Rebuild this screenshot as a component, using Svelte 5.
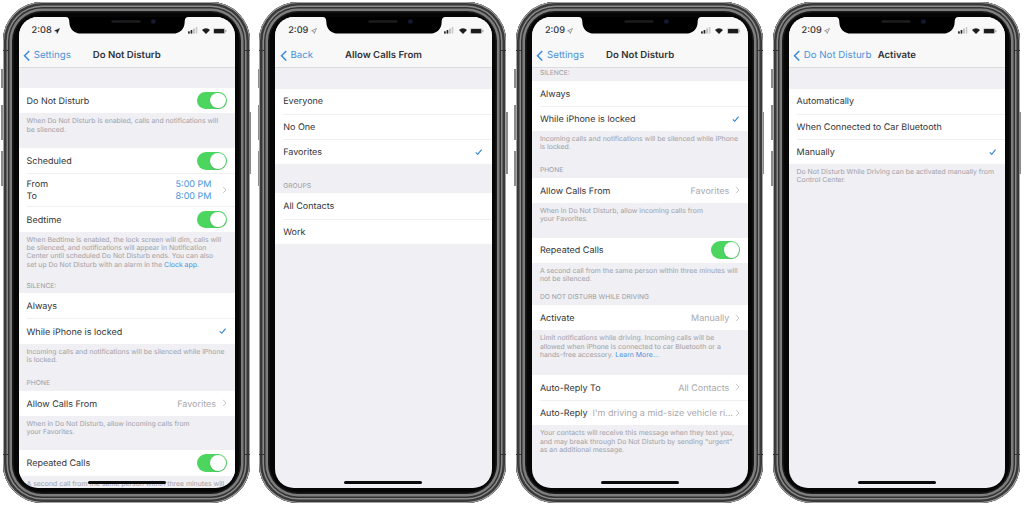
<script>
  const gap = (h) => ({ kind: 'gap', h });
  const head = (text, h) => ({ kind: 'head', text, h });
  const foot = (lines, link = '') => ({ kind: 'foot', lines, link });
  const group = (...rows) => ({ kind: 'group', rows });

  const phones = [
    {
      time: '2:08',
      solidArrow: true,
      back: 'Settings',
      title: 'Do Not Disturb',
      blocks: [
        gap(20.5),
        group({ label: 'Do Not Disturb', toggle: true }),
        foot(['When Do Not Disturb is enabled, calls and notifications will', 'be silenced.']),
        gap(14.2),
        group(
          { label: 'Scheduled', toggle: true },
          { times: [['From', '5:00 PM'], ['To', '8:00 PM']] },
          { label: 'Bedtime', toggle: true }
        ),
        foot(
          [
            'When Bedtime is enabled, the lock screen will dim, calls will',
            'be silenced, and notifications will appear in Notification',
            'Center until scheduled Do Not Disturb ends. You can also',
            'set up Do Not Disturb with an alarm in the',
          ],
          'Clock app.'
        ),
        head('SILENCE:', 24),
        group({ label: 'Always' }, { label: 'While iPhone is locked', check: true }),
        foot(['Incoming calls and notifications will be silenced while iPhone', 'is locked.']),
        head('PHONE', 26.4),
        group({ label: 'Allow Calls From', value: 'Favorites', chevron: true }),
        foot(['When in Do Not Disturb, allow incoming calls from', 'your Favorites.']),
        gap(13.7),
        group({ label: 'Repeated Calls', toggle: true }),
        foot(['A second call from the same person within three minutes will', 'not be silenced.']),
      ],
    },
    {
      time: '2:09',
      back: 'Back',
      title: 'Allow Calls From',
      blocks: [
        gap(21),
        group({ label: 'Everyone' }, { label: 'No One' }, { label: 'Favorites', check: true }),
        head('GROUPS', 29.3),
        group({ label: 'All Contacts' }, { label: 'Work' }),
      ],
    },
    {
      time: '2:09',
      back: 'Settings',
      title: 'Do Not Disturb',
      blocks: [
        head('SILENCE:', 13.2),
        group({ label: 'Always' }, { label: 'While iPhone is locked', check: true }),
        foot(['Incoming calls and notifications will be silenced while iPhone', 'is locked.']),
        head('PHONE', 26),
        group({ label: 'Allow Calls From', value: 'Favorites', chevron: true }),
        foot(['When in Do Not Disturb, allow incoming calls from', 'your Favorites.']),
        gap(13.7),
        group({ label: 'Repeated Calls', toggle: true }),
        foot(['A second call from the same person within three minutes will', 'not be silenced.']),
        head('DO NOT DISTURB WHILE DRIVING', 21.4),
        group({ label: 'Activate', value: 'Manually', chevron: true }),
        foot(
          [
            'Limit notifications while driving. Incoming calls will be',
            'allowed when iPhone is connected to car Bluetooth or a',
            'hands-free accessory.',
          ],
          'Learn More...'
        ),
        gap(15.4),
        group(
          { label: 'Auto-Reply To', value: 'All Contacts', chevron: true },
          { label: 'Auto-Reply', value: "I'm driving a mid-size vehicle ri...", chevron: true }
        ),
        foot([
          'Your contacts will receive this message when they text you,',
          'and may break through Do Not Disturb by sending "urgent"',
          'as an additional message.',
        ]),
      ],
    },
    {
      time: '2:09',
      back: 'Do Not Disturb',
      title: 'Activate',
      blocks: [
        gap(21),
        group(
          { label: 'Automatically' },
          { label: 'When Connected to Car Bluetooth' },
          { label: 'Manually', check: true }
        ),
        foot(['Do Not Disturb While Driving can be activated manually from', 'Control Center.']),
      ],
    },
  ];
</script>

{#snippet chevron()}
  <svg class="chev" viewBox="0 0 5 8" aria-hidden="true">
    <path d="M1 .8 4 4 1 7.2" fill="none" stroke="#c7c7cc" stroke-width="1" />
  </svg>
{/snippet}

{#snippet statusIcons()}
  <svg class="signal" viewBox="0 0 11 7" aria-hidden="true">
    <rect x="0" y="4.6" width="1.8" height="2.4" fill="#222" />
    <rect x="2.7" y="3.2" width="1.8" height="3.8" fill="#222" />
    <rect x="5.4" y="1.6" width="1.8" height="5.4" fill="#bbb" />
    <rect x="8.1" y="0" width="1.8" height="7" fill="#ccc" />
  </svg>
  <svg class="wifi" viewBox="0 0 10 7.4" aria-hidden="true">
    <path d="M5 7.4 0 2.3A7.2 7.2 0 0 1 10 2.3Z" fill="#1d1d1d" />
  </svg>
  <svg class="battery" viewBox="0 0 14 6.4" aria-hidden="true">
    <rect x=".3" y=".3" width="12" height="5.8" rx="1.5" fill="none" stroke="#888" stroke-width=".5" />
    <rect x="1" y="1" width="10.6" height="4.4" rx=".8" fill="#1b1b1b" />
    <rect x="12.8" y="2.1" width="1" height="2.2" rx=".5" fill="#999" />
  </svg>
{/snippet}

<div class="page">
  {#each phones as phone}
    <div class="phone">
      <span class="btn mute"></span>
      <span class="btn vol-up"></span>
      <span class="btn vol-down"></span>
      <span class="btn power"></span>
      <span class="band top-l"></span>
      <span class="band top-r"></span>
      <span class="band bot-l"></span>
      <span class="band bot-r"></span>

      <div class="screen">
        <div class="bars">
          <div class="clock">
            <span>{phone.time}</span>
            <svg class="arrow" viewBox="0 0 7 7" aria-hidden="true">
              <path
                d="M6.4.6 3.7 6.3 3.1 3.9.7 3.3Z"
                fill={phone.solidArrow ? '#222' : 'none'}
                stroke={phone.solidArrow ? '#222' : '#555'}
                stroke-width=".6"
              />
            </svg>
          </div>
          <div class="status-icons">{@render statusIcons()}</div>
        </div>

        <svg class="notch" viewBox="0 0 126 18" aria-hidden="true">
          <path d="M0 0H126C123 0 122 2 122 5 122 12 117 17 110 17H16C9 17 4 12 4 5 4 2 3 0 0 0Z" fill="#000" />
          <rect x="47" y="3.4" width="30" height="2.4" rx="1.2" fill="#1d1d1f" />
          <circle cx="90" cy="4.6" r="2.4" fill="#141a33" />
        </svg>

        <div class="nav">
          <div class="back">
            <svg viewBox="0 0 8 12" aria-hidden="true">
              <path d="M6.6 1 1.6 6l5 5" fill="none" stroke="#3b8bd9" stroke-width="1.6" />
            </svg>
            <span>{phone.back}</span>
          </div>
          <div class="title">{phone.title}</div>
        </div>

        <div class="content">
          {#each phone.blocks as block}
            {#if block.kind === 'gap'}
              <div style="height: {block.h}px"></div>
            {:else if block.kind === 'head'}
              <div class="head" style="height: {block.h}px">{block.text}</div>
            {:else if block.kind === 'foot'}
              <div class="foot">
                {#each block.lines as line, i}
                  <div>
                    {line}
                    {#if block.link && i === block.lines.length - 1}<span class="link">{block.link}</span>{/if}
                  </div>
                {/each}
              </div>
            {:else}
              <div class="group">
                {#each block.rows as row}
                  {#if row.times}
                    <div class="row tall">
                      <div class="times">
                        {#each row.times as [name, at]}
                          <div class="time-line"><span>{name}</span><span class="at">{at}</span></div>
                        {/each}
                      </div>
                      {@render chevron()}
                    </div>
                  {:else}
                    <div class="row">
                      <span class="label">{row.label}</span>
                      {#if row.value}<span class="value">{row.value}</span>{/if}
                      {#if row.chevron}{@render chevron()}{/if}
                      {#if row.toggle}<span class="toggle"><span class="knob"></span></span>{/if}
                      {#if row.check}
                        <svg class="check" viewBox="0 0 8 7" aria-hidden="true">
                          <path d="M.8 3.8 2.9 5.8 7.2 .8" fill="none" stroke="#2f7fd0" stroke-width="1.2" />
                        </svg>
                      {/if}
                    </div>
                  {/if}
                {/each}
              </div>
            {/if}
          {/each}
        </div>

        <span class="home"></span>
      </div>
    </div>
  {/each}
</div>

<style>
  :global(body) {
    margin: 0;
    background: #fff;
  }
  .page {
    display: flex;
    gap: 9.7px;
    height: 505px;
    box-sizing: border-box;
    padding: 2px 0 0 2.5px;
    overflow: hidden;
    font-family: Inter, 'Liberation Sans', sans-serif;
    color: #333336;
    text-rendering: geometricPrecision;
  }
  .phone {
    position: relative;
    flex: none;
    width: 247px;
    height: 501px;
    box-sizing: border-box;
    padding: 15px 14.5px 15px 16px;
    border-radius: 39px;
    background: #060606;
    box-shadow:
      inset 0 0 0 1px #a4a4a4,
      inset 0 0 0 3.5px #3a3a3a,
      inset 0 0 0 5px #8a8a8a,
      inset 0 0 0 6.5px #333,
      inset 0 0 0 9px #7d7d7d,
      inset 0 0 0 10.5px #1a1a1a;
  }
  .btn {
    position: absolute;
    width: 1.6px;
    background: #8c8c8c;
  }
  .mute { left: -1.4px; top: 67px; height: 19px; }
  .vol-up { left: -1.4px; top: 103px; height: 35px; }
  .vol-down { left: -1.4px; top: 149px; height: 35px; }
  .power { right: -1.4px; top: 110px; height: 62px; }
  .band {
    position: absolute;
    width: 5px;
    height: 1.4px;
    background: #333;
  }
  .top-l { left: 0; top: 48px; }
  .top-r { right: 0; top: 48px; }
  .bot-l { left: 0; top: 452px; }
  .bot-r { right: 0; top: 452px; }

  .screen {
    position: relative;
    display: flex;
    flex-direction: column;
    height: 100%;
    overflow: hidden;
    border-radius: 19px;
    background: #efeff4;
  }
  .bars {
    flex: none;
    display: flex;
    justify-content: space-between;
    align-items: center;
    height: 26px;
    padding: 0 8px 0 13px;
    background: #f8f8f8;
    box-sizing: border-box;
  }
  .clock {
    display: flex;
    align-items: center;
    gap: 2.4px;
    font-size: 9.2px;
    font-weight: 500;
    margin-top: 1.5px;
  }
  .arrow {
    width: 6px;
    height: 6px;
  }
  .status-icons {
    display: flex;
    align-items: center;
    gap: 3.6px;
    margin-top: 1.5px;
  }
  .signal { width: 10.5px; height: 6.6px; }
  .wifi { width: 8px; height: 6px; }
  .battery { width: 13.6px; height: 6.2px; }
  .notch {
    position: absolute;
    left: 45.5px;
    top: 0;
    width: 126px;
    height: 17.6px;
  }

  .nav {
    flex: none;
    display: grid;
    grid-template-columns: 1fr auto 1fr;
    align-items: center;
    height: 24.5px;
    box-sizing: border-box;
    padding-top: 1.5px;
    background: #f8f8f8;
    border-bottom: 0.6px solid #dcdce0;
  }
  .back {
    display: flex;
    align-items: center;
    gap: 3px;
    padding-left: 4.6px;
    font-size: 9.7px;
    color: #4a93d9;
    white-space: nowrap;
  }
  .back svg {
    width: 7.6px;
    height: 11.5px;
  }
  .title {
    font-size: 9.6px;
    font-weight: 600;
    white-space: nowrap;
  }

  .content {
    flex: 1;
    min-height: 0;
    overflow: hidden;
  }
  .head {
    display: flex;
    align-items: flex-end;
    box-sizing: border-box;
    padding: 0 8px 3.6px;
    font-size: 6.7px;
    line-height: 8px;
    color: #9a9aa0;
    white-space: nowrap;
  }
  .foot {
    padding: 4px 8px 0;
    font-size: 6.9px;
    line-height: 8.4px;
    color: #a0a0a5;
    white-space: nowrap;
  }
  .link {
    color: #4a93d9;
  }
  .group {
    background: #fff;
  }
  .row {
    display: flex;
    align-items: center;
    height: 25.2px;
    box-sizing: border-box;
    margin-left: 8px;
    padding-right: 8px;
    font-size: 9px;
    white-space: nowrap;
  }
  .row + .row {
    border-top: 0.6px solid #f0f0f1;
  }
  .row.tall {
    height: 33px;
  }
  .label {
    flex: none;
    padding-top: 1.6px;
  }
  .value {
    flex: 1;
    min-width: 0;
    margin-left: 5px;
    padding-top: 1.6px;
    text-align: right;
    color: #a8a8ad;
  }
  .chev {
    flex: none;
    width: 5px;
    height: 8px;
    margin-left: 6px;
  }
  .times {
    flex: 1;
    display: flex;
    flex-direction: column;
    gap: 1.6px;
    margin-right: 4.6px;
  }
  .time-line {
    display: flex;
    justify-content: space-between;
  }
  .at {
    color: #4a93d9;
  }
  .toggle {
    display: flex;
    justify-content: flex-end;
    align-items: center;
    width: 29.6px;
    height: 17.6px;
    margin-left: auto;
    padding-right: 0.9px;
    box-sizing: border-box;
    border-radius: 9px;
    background: #4cd660;
  }
  .knob {
    width: 15.8px;
    height: 15.8px;
    border-radius: 50%;
    background: #fff;
    box-shadow: 0 0.5px 1.2px rgba(0, 0, 0, 0.25);
  }
  .check {
    width: 7.4px;
    height: 6.4px;
    margin-left: auto;
    margin-right: 1px;
  }
  .home {
    position: absolute;
    left: 69px;
    bottom: 4px;
    width: 78px;
    height: 2.8px;
    border-radius: 2px;
    background: #0a0a0a;
  }
</style>
